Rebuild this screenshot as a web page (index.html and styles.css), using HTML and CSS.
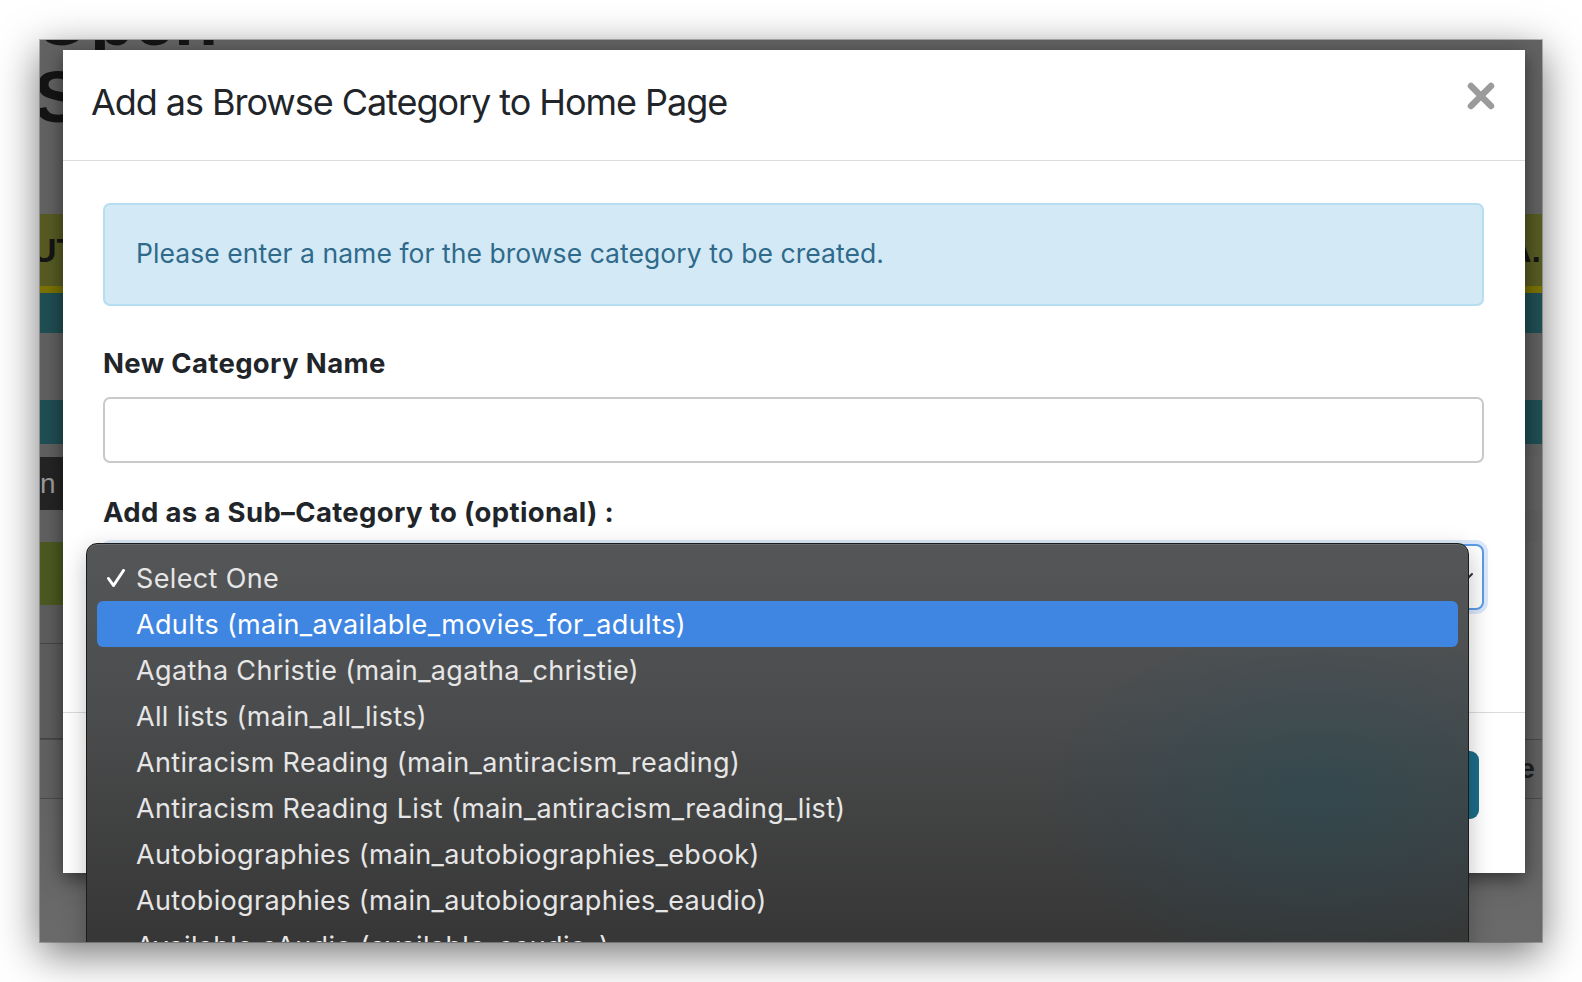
FILE: index.html
```html
<!DOCTYPE html>
<html lang="en">
<head>
<meta charset="utf-8">
<title>Add as Browse Category to Home Page</title>
<link rel="stylesheet" href="styles.css">
</head>
<body>
<div class="screen">
  <div class="window">
    <div class="page">
      <div class="page-title">Open<br>Search</div>
      <div class="band band-olive"><span class="band-text-left">UT</span><span class="band-text-right">A.</span></div>
      <div class="band band-yellow"></div>
      <div class="band band-teal"></div>
      <div class="band band-gray h67"></div>
      <div class="band band-teal h44"></div>
      <div class="band band-gray h13"></div>
      <div class="band band-dark"><span class="dark-text">n</span></div>
      <div class="band band-gray h32"></div>
      <div class="band band-green"></div>
      <div class="band band-line-left h39"></div>
      <div class="band band-line-left h95"></div>
      <div class="band band-row"><span class="row-text">Close (</span></div>
      <div class="band band-rest"></div>
    </div>

    <div class="modal">
      <div class="modal-header">
        <h4 class="modal-title">Add as Browse Category to Home Page</h4>
        <svg class="close-icon" width="28" height="28" viewBox="0 0 28 28"><path d="M4 4 L24 24 M24 4 L4 24" stroke="#9b9b9b" stroke-width="6.5" stroke-linecap="round" fill="none"/></svg>
      </div>
      <div class="modal-body">
        <div class="alert">Please enter a name for the browse category to be created.</div>
        <label class="field-label first">New Category Name</label>
        <div class="text-input"></div>
        <label class="field-label second">Add as a Sub–Category to (optional) :</label>
        <div class="select-box">
          <svg class="select-chevron" width="16" height="10" viewBox="0 0 16 10"><path d="M2 2 L8 8 L14 2" stroke="#333" stroke-width="2" fill="none" stroke-linecap="round"/></svg>
        </div>
      </div>
      <div class="modal-footer">
        <div class="btn-primary">Create Category</div>
      </div>
    </div>

    <div class="dropdown">
      <div class="opt"><span class="opt-mark"><svg width="18" height="18" viewBox="0 0 18 18"><path d="M1.5 9.5 L6.5 16.5 L16.5 1.5" stroke="#ffffff" stroke-width="3" fill="none" stroke-linejoin="round" stroke-linecap="round"/></svg></span><span>Select One</span></div>
      <div class="opt active"><span class="opt-mark"></span><span>Adults (main_available_movies_for_adults)</span></div>
      <div class="opt"><span class="opt-mark"></span><span>Agatha Christie (main_agatha_christie)</span></div>
      <div class="opt"><span class="opt-mark"></span><span>All lists (main_all_lists)</span></div>
      <div class="opt"><span class="opt-mark"></span><span>Antiracism Reading (main_antiracism_reading)</span></div>
      <div class="opt"><span class="opt-mark"></span><span>Antiracism Reading List (main_antiracism_reading_list)</span></div>
      <div class="opt"><span class="opt-mark"></span><span>Autobiographies (main_autobiographies_ebook)</span></div>
      <div class="opt"><span class="opt-mark"></span><span>Autobiographies (main_autobiographies_eaudio)</span></div>
      <div class="opt"><span class="opt-mark"></span><span>Available eAudio (available_eaudio_)</span></div>
    </div>
  </div>
</div>
</body>
</html>
```

FILE: styles.css
```css
* { box-sizing: border-box; }

html, body {
  margin: 0;
  padding: 0;
  background: #ffffff;
}

.screen {
  width: 1582px;
  height: 982px;
  padding: 40px;
  background: #ffffff;
  overflow: hidden;
}

.window {
  position: relative;
  width: 1502px;
  height: 902px;
  overflow: hidden;
  background: #626262;
  box-shadow: 0 12px 40px rgba(0, 0, 0, 0.55), 0 0 0 1px rgba(0, 0, 0, 0.25);
}

/* ---- dimmed page behind the modal ---- */
.page {
  display: flex;
  flex-direction: column;
  height: 100%;
}

.page-title {
  margin: -58px 0 0 -6px;
  font: 700 72px/77px "Liberation Sans", Arial, sans-serif;
  color: #141414;
  height: 154px;
  flex: none;
}

.band { flex: none; width: 100%; }

.band-olive {
  margin-top: 78px;
  height: 72px;
  background: #575b22;
  display: flex;
  justify-content: space-between;
  align-items: center;
  font: 700 34px/1 "Liberation Sans", Arial, sans-serif;
  color: #151515;
}
.band-text-left { margin-left: -8px; }
.band-text-right { margin-right: 1px; }

.band-yellow { height: 7px; background: #7a7200; }
.band-teal { height: 40px; background: #1f4e53; }
.band-gray { background: #606060; }
.h67 { height: 67px; }
.h44 { height: 44px; }
.h13 { height: 13px; }
.h32 { height: 32px; }

.band-dark {
  height: 53px;
  width: 420px;
  background: #242424;
  display: flex;
  align-items: center;
  font: 400 28px/1 "Liberation Sans", Arial, sans-serif;
  color: #9a9a9a;
}

.band-green {
  height: 63px;
  width: 620px;
  background: #4c5920;
}

.band-line-left {
  width: 620px;
  border-bottom: 1px solid #464646;
  background: #5d5d5d;
}
.h39 { height: 39px; }
.h95 { height: 95px; }

.band-row {
  height: 60px;
  border-top: 1px solid #4a4a4a;
  border-bottom: 1px solid #4a4a4a;
  background: #616161;
  display: flex;
  justify-content: flex-end;
  align-items: center;
  font: 700 28px/1 "Liberation Sans", Arial, sans-serif;
  color: #1e1e1e;
  overflow: hidden;
}
.row-text { margin-right: -10px; }

.band-rest {
  flex: 1;
  background: linear-gradient(#646464, #6a6a6a);
}

/* ---- modal ---- */
.modal {
  position: absolute;
  left: 23px;
  top: 10px;
  width: 1462px;
  height: 823px;
  background: #ffffff;
  box-shadow: 0 6px 18px rgba(0, 0, 0, 0.5);
  font-family: Inter, "Noto Sans", sans-serif;
  color: #212529;
  display: flex;
  flex-direction: column;
}

.modal-header {
  height: 111px;
  flex: none;
  border-bottom: 1px solid #dcdcdc;
  display: flex;
  justify-content: space-between;
  align-items: flex-start;
  padding: 0 30px 0 28px;
}

.modal-title {
  margin: 30px 0 0 0;
  font-size: 36px;
  line-height: 44px;
  font-weight: 400;
  letter-spacing: -1.05px;
}

.close-icon {
  margin-top: 32px;
  flex: none;
}

.modal-body {
  height: 552px;
  flex: none;
  padding: 42px 41px 0 40px;
  display: flex;
  flex-direction: column;
  border-bottom: 1px solid #dcdcdc;
}

.alert {
  height: 103px;
  flex: none;
  background: #d3e9f5;
  border: 2px solid #b7def0;
  border-radius: 7px;
  color: #2f6a8b;
  font-size: 26.5px;
  letter-spacing: 0.06px;
  display: flex;
  align-items: center;
  padding: 0 0 4px 31px;
}

.field-label {
  display: block;
  font-size: 27.5px;
  line-height: 32px;
  font-weight: 700;
  letter-spacing: 0.35px;
  color: #212529;
}
.field-label.first { margin-top: 41px; }
.field-label.second { margin-top: 33px; }

.text-input {
  margin-top: 18px;
  height: 66px;
  flex: none;
  border: 2px solid #c9c9c9;
  border-radius: 7px;
  background: #fff;
}

.select-box {
  margin-top: 16px;
  height: 66px;
  flex: none;
  border: 2px solid #5c9ce6;
  border-radius: 8px;
  background: #fff;
  box-shadow: 0 0 0 4px rgba(92, 156, 230, 0.22);
  display: flex;
  justify-content: flex-end;
  align-items: center;
  padding-right: 8px;
}

.modal-footer {
  flex: 1;
  display: flex;
  justify-content: flex-end;
  align-items: flex-start;
  padding: 38px 46px 0 0;
}

.btn-primary {
  height: 68px;
  padding: 0 28px;
  background: #1a6d8a;
  border-radius: 9px;
  color: #fff;
  font-size: 26px;
  display: flex;
  align-items: center;
}

/* ---- native select popup ---- */
.dropdown {
  position: absolute;
  left: 46px;
  top: 503px;
  width: 1383px;
  height: 470px;
  border: 1px solid #1b1b1b;
  border-radius: 11px;
  padding: 11px 10px 0 10px;
  background:
    radial-gradient(ellipse 280px 180px at 1232px 250px, rgba(30, 78, 92, 0.42), rgba(30, 78, 92, 0) 100%),
    linear-gradient(#555657 0%, #4b4c4d 35%, #353535 88%, #313131 100%);
  box-shadow: 0 8px 24px rgba(0, 0, 0, 0.25), inset 0 1px 0 rgba(255, 255, 255, 0.12);
  font-family: Inter, "Noto Sans", sans-serif;
  font-size: 27px;
  letter-spacing: 0.35px;
  color: #e6e6e6;
}

.opt {
  height: 46px;
  display: flex;
  align-items: center;
  border-radius: 6px;
}

.opt.active {
  background: #3f86e2;
  color: #ffffff;
}

.opt-mark {
  width: 39px;
  flex: none;
  display: flex;
  align-items: center;
  padding-left: 10px;
}
.opt-mark svg { display: block; }
```
